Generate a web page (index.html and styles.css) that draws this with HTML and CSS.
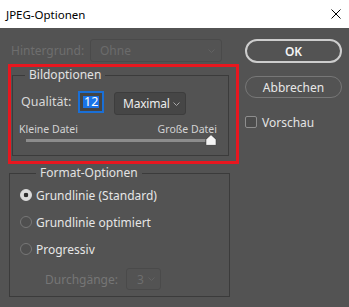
FILE: index.html
```html
<!DOCTYPE html>
<html>
<head>
    <title>JPEG-Optionen</title>
    <link rel="stylesheet" href="styles.css">
</head>
<body>
    <div class="dialog">
        <div class="titleBar">
            <span class="titleText">JPEG-Optionen</span>
            <svg class="closeIcon" width="10" height="10" viewBox="0 0 10 10"><path d="M0.5 0.5 L9.5 9.5 M9.5 0.5 L0.5 9.5" stroke="#000" stroke-width="1" fill="none"/></svg>
        </div>
        <div class="content">
            <div class="leftCol">
                <div class="bgRow">
                    <span class="bgLabel">Hintergrund:</span>
                    <div class="select selectOhne">
                        <span>Ohne</span>
                        <svg class="chevron" width="7" height="4" viewBox="0 0 7 4"><path d="M0.5 0.5 L3.5 3.5 L6.5 0.5" stroke="#626262" fill="none"/></svg>
                    </div>
                </div>
                <div class="highlight">
                    <fieldset class="group groupBild">
                        <legend>Bildoptionen</legend>
                        <div class="qualityRow">
                            <span class="qualityLabel">Qualität:</span>
                            <div class="qualityInput"><span class="selectedText">12</span></div>
                            <div class="select selectMax">
                                <span>Maximal</span>
                                <svg class="chevron" width="7" height="4" viewBox="0 0 7 4"><path d="M0.5 0.5 L3.5 3.5 L6.5 0.5" stroke="#a8a8a8" fill="none"/></svg>
                            </div>
                        </div>
                        <div class="sliderLabels">
                            <span>Kleine Datei</span>
                            <span>Große Datei</span>
                        </div>
                        <div class="slider">
                            <div class="track"></div>
                            <svg class="thumb" width="12" height="12" viewBox="0 0 12 12"><path d="M6 0.6 L11.2 5.4 L11.2 10.6 Q11.2 11.4 10.4 11.4 L1.6 11.4 Q0.8 11.4 0.8 10.6 L0.8 5.4 Z" fill="#f4f4f4" stroke="#2f2f2f" stroke-width="0.8"/></svg>
                        </div>
                    </fieldset>
                </div>
                <fieldset class="group groupFormat">
                    <legend>Format-Optionen</legend>
                    <div class="radioRow">
                        <span class="radio radioOn"></span>
                        <span>Grundlinie (Standard)</span>
                    </div>
                    <div class="radioRow">
                        <span class="radio"></span>
                        <span>Grundlinie optimiert</span>
                    </div>
                    <div class="radioRow">
                        <span class="radio"></span>
                        <span>Progressiv</span>
                    </div>
                    <div class="passRow">
                        <span class="passLabel">Durchgänge:</span>
                        <div class="select selectPass">
                            <span>3</span>
                            <svg class="chevron" width="7" height="4" viewBox="0 0 7 4"><path d="M0.5 0.5 L3.5 3.5 L6.5 0.5" stroke="#626262" fill="none"/></svg>
                        </div>
                    </div>
                </fieldset>
            </div>
            <div class="rightCol">
                <button class="btn btnOk">OK</button>
                <button class="btn btnCancel">Abbrechen</button>
                <div class="checkRow">
                    <span class="checkBox"></span>
                    <span>Vorschau</span>
                </div>
            </div>
        </div>
    </div>
</body>
</html>
```

FILE: styles.css
```css
body {
    margin: 0;
    background-color: #535353;
    font-family: "Noto Sans", "Open Sans", sans-serif;
}

.dialog {
    width: 349px;
    height: 307px;
    background-color: #535353;
    overflow: hidden;
}

.titleBar {
    height: 28px;
    background-color: white;
    display: flex;
    align-items: center;
    justify-content: space-between;
    padding: 0 8px 0 6px;
}

.titleText {
    font-size: 11.5px;
    color: #000;
}

.closeIcon {
    display: block;
}

.content {
    display: flex;
    padding: 11px 0 0 8px;
}

.leftCol {
    width: 231px;
}

.bgRow {
    display: flex;
    align-items: center;
    height: 23px;
}

.bgLabel {
    width: 79px;
    padding-left: 3px;
    font-size: 12px;
    color: #6e6e6e;
}

.select {
    box-sizing: border-box;
    display: flex;
    align-items: center;
    justify-content: space-between;
    border-radius: 3px;
}

.selectOhne {
    width: 132px;
    height: 23px;
    border: 1px solid #4a4a4a;
    padding: 0 6px 0 9px;
    font-size: 12px;
    color: #6b6b6b;
}

.highlight {
    margin-top: 2px;
    border: 3px solid #e8171f;
}

.group {
    border: 1px solid #3b3b3b;
    padding: 0;
    min-width: 0;
}

.group legend {
    padding: 0 4px;
    font-size: 12px;
    line-height: 16px;
    color: #e2e2e2;
}

.groupBild {
    margin: 0 7px 5px 1px;
    padding: 8px 11px 9px 0;
}

.groupBild legend {
    margin-left: 12px;
}

.qualityRow {
    display: flex;
    align-items: flex-start;
    height: 24px;
    padding-left: 8px;
}

.qualityLabel {
    width: 57px;
    font-size: 12.5px;
    line-height: 22px;
    color: #d8d8d8;
}

.qualityInput {
    box-sizing: border-box;
    width: 26px;
    height: 22px;
    border: 2px solid #1a6fd6;
    background-color: #444;
    display: flex;
    align-items: center;
    padding-left: 3px;
    margin-right: 10px;
}

.selectedText {
    background-color: #1a73e8;
    color: #fff;
    font-size: 12.5px;
    line-height: 12px;
    padding: 0 1px;
}

.selectMax {
    margin-top: 1px;
    width: 72px;
    height: 23px;
    background-color: #464646;
    border: 1px solid #3d3d3d;
    padding: 0 5px 0 8px;
    font-size: 12px;
    letter-spacing: -0.2px;
    color: #ececec;
}

.sliderLabels {
    display: flex;
    justify-content: space-between;
    margin-top: 8px;
    padding-left: 6px;
    font-size: 10.5px;
    line-height: 12px;
    color: #d2d2d2;
}

.slider {
    display: flex;
    align-items: center;
    margin-top: -1px;
    padding-left: 13px;
}

.track {
    flex: 1;
    height: 3px;
    background-color: #8c8c8c;
}

.thumb {
    display: block;
    margin-left: -6px;
}

.groupFormat {
    margin: 1px 9px 0 1px;
    padding: 4px 0 6px 10px;
}

.groupFormat legend {
    margin-left: 16px;
}

.radioRow {
    display: flex;
    align-items: center;
    height: 20px;
    margin-bottom: 7px;
    font-size: 12px;
    color: #e6e6e6;
}

.radioRow:nth-child(4) {
    margin-bottom: 0;
}

.radio {
    box-sizing: border-box;
    width: 12px;
    height: 12px;
    border-radius: 50%;
    border: 1px solid #777;
    background-color: #4f4f4f;
    margin-right: 4px;
}

.radioOn {
    border-color: #dcdcdc;
    background: radial-gradient(circle, #2e2e2e 0 2px, #dcdcdc 2.6px);
}

.passRow {
    display: flex;
    align-items: center;
    margin-top: 9px;
    padding-left: 25px;
}

.passLabel {
    width: 81px;
    font-size: 12px;
    color: #767676;
}

.selectPass {
    width: 35px;
    height: 22px;
    border: 1px solid #4a4a4a;
    padding: 0 5px 0 10px;
    font-size: 12px;
    color: #6e6e6e;
}

.rightCol {
    margin-left: 6px;
    width: 97px;
    display: flex;
    flex-direction: column;
}

.btn {
    box-sizing: border-box;
    width: 97px;
    border-radius: 12px;
    background-color: transparent;
    font-family: inherit;
    font-size: 12px;
    padding: 0;
}

.btnOk {
    height: 24px;
    border: 2px solid #cdcdcd;
    color: #f4f4f4;
    font-weight: 600;
}

.btnCancel {
    height: 22px;
    margin-top: 13px;
    border: 1px solid #777;
    color: #e8e8e8;
}

.checkRow {
    display: flex;
    align-items: center;
    height: 16px;
    margin-top: 16px;
    font-size: 12px;
    color: #e4e4e4;
}

.checkBox {
    box-sizing: border-box;
    width: 12px;
    height: 12px;
    border: 1px solid #8e8e8e;
    border-radius: 2px;
    background-color: #4c4c4c;
    margin-right: 5px;
}
```
